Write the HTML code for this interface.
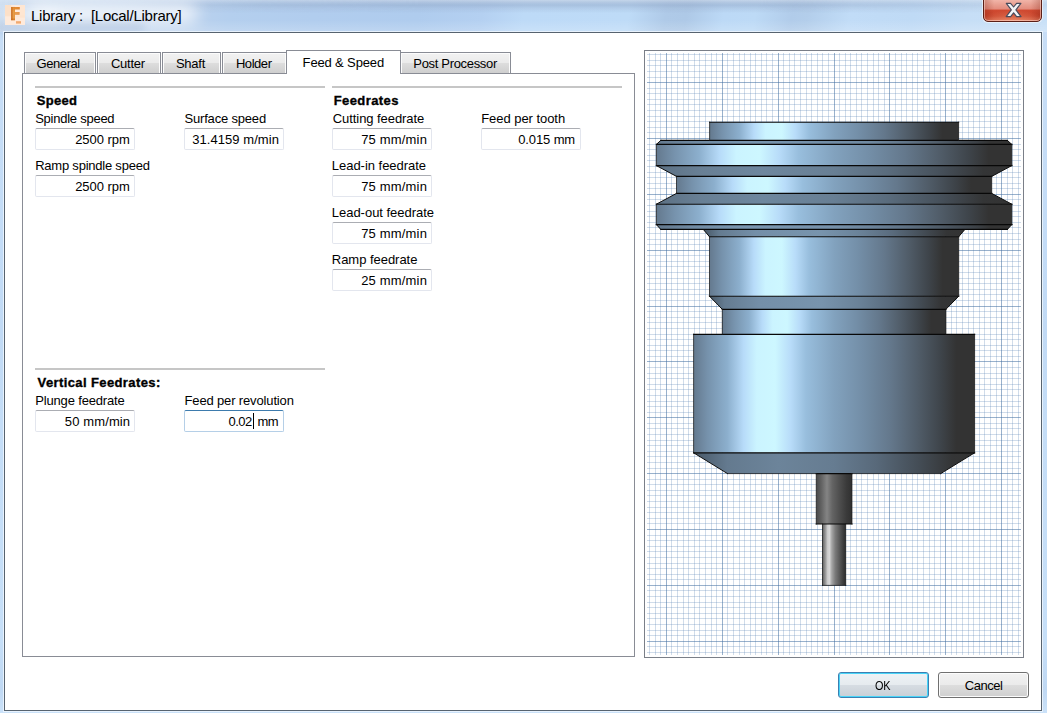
<!DOCTYPE html>
<html><head><meta charset="utf-8"><title>Library</title>
<style>
html,body{margin:0;padding:0}
body{width:1047px;height:713px;overflow:hidden;position:relative;background:#c3dcf6;font-family:"Liberation Sans", sans-serif;}
.abs{position:absolute}
#frame{position:absolute;left:0;top:0;width:1047px;height:713px;
 background:linear-gradient(180deg,#c8def6 0px,#c3dcf7 250px,#c1daf5 330px,#c4ddf7 420px,#c6dff8 640px,#bfd8f3 690px,#cbe2f9 713px);}
#titlebar{position:absolute;left:0;top:0;width:1047px;height:32px;
 background:
  linear-gradient(180deg,rgba(255,255,255,.22) 0px,rgba(255,255,255,.1) 3px,rgba(255,255,255,0) 12px,rgba(255,255,255,0) 20px,rgba(255,255,255,.18) 31px),
  linear-gradient(100deg,#cbdcf0 0%,#bdd3ee 17%,#b4cfee 22%,#b1cdee 30%,#afccee 40%,#b4d0f1 46%,#bddaf7 50%,#bedbf7 60%,#afcae8 63.5%,#aec9e7 65.5%,#bcd9f6 69%,#bddaf6 72%,#b1ccea 75.5%,#b3ceeb 77%,#c1dcf7 81%,#bfdaf5 87%,#c6def6 92%,#c8e0f7 100%);}
#band{position:absolute;left:0;top:0;width:1047px;height:14px;
 background:linear-gradient(180deg,rgba(190,203,222,.55) 0px,rgba(170,188,214,.6) 2px,rgba(140,164,198,.5) 5px,rgba(145,168,202,.3) 8px,rgba(170,195,225,0) 13px);
 -webkit-mask-image:linear-gradient(90deg,rgba(0,0,0,0) 0px,rgba(0,0,0,.15) 120px,rgba(0,0,0,.8) 260px,#000 420px,#000 760px,rgba(0,0,0,.7) 900px,rgba(0,0,0,.35) 1047px);
 mask-image:linear-gradient(90deg,rgba(0,0,0,0) 0px,rgba(0,0,0,.15) 120px,rgba(0,0,0,.8) 260px,#000 420px,#000 760px,rgba(0,0,0,.7) 900px,rgba(0,0,0,.35) 1047px);}
#shade{position:absolute;left:-6px;top:23px;width:150px;height:9px;background:rgba(110,140,185,.24);filter:blur(4px)}
#glow{position:absolute;left:26px;top:3px;width:172px;height:21px;border-radius:11px;background:rgba(255,255,255,.72);filter:blur(8px)}
#glow2{position:absolute;left:0px;top:8px;width:60px;height:20px;background:rgba(240,246,252,.35);filter:blur(5px)}
#client{position:absolute;left:4px;top:32px;width:1036px;height:677px;background:#fff;border:1px solid #57636f;
 box-shadow:0 0 0 1px rgba(235,244,253,.9);}
.t{position:absolute;white-space:pre;line-height:20px;height:20px;}
.ed{position:absolute;background:#fff;border:1px solid #e3e6ee;border-top-color:#abadb3;border-radius:2px;}
.ed.foc{border-color:#b5cfe7;border-top-color:#3d7bad;}
.tab{position:absolute;border:1px solid #898c95;border-bottom:none;
 background:linear-gradient(180deg,#f2f2f2 0%,#ebebeb 48%,#dddddd 52%,#cfcfcf 100%);box-shadow:inset 1px 1px 0 #fcfcfc, inset -1px 0 0 #fcfcfc;}
.tab.sel{background:#fff;box-shadow:none}
#pane{position:absolute;left:22px;top:73px;width:611px;height:582px;border:1px solid #898c95;background:#fff}
.sep{position:absolute;height:2px;background:#c6c6c6}
#preview{position:absolute;left:644px;top:50px;width:378px;height:606px;border:1px solid #7a7f88;background:#fff}
.btn{position:absolute;border:1px solid #707070;border-radius:3px;box-shadow:inset 0 0 0 1px #fcfcfc;
 background:linear-gradient(180deg,#f2f2f2 0%,#ebebeb 48%,#dddddd 52%,#cfcfcf 100%);}
.btn.def{border-color:#3c7fb1;box-shadow:inset 0 0 0 1px #48d4f8;
 background:linear-gradient(180deg,#eef2f5 0%,#e6ebef 48%,#d6dce2 52%,#c8cfd6 100%);}
#close{position:absolute;left:983px;top:-2px;width:57px;height:22px;border:1px solid #5b1f17;border-radius:0 0 5px 5px;
 box-shadow:inset 0 0 0 1px rgba(255,220,210,.55), 0 0 0 1px rgba(255,255,255,.55);
 background:
  radial-gradient(ellipse 60% 55% at 50% 105%,rgba(255,170,130,.55) 0%,rgba(255,170,130,0) 100%),
  linear-gradient(90deg,rgba(120,30,15,.28) 0%,rgba(120,30,15,0) 18%,rgba(120,30,15,0) 82%,rgba(120,30,15,.28) 100%),
  linear-gradient(180deg,#f3b9ad 0%,#e9a092 25%,#e38c7d 46%,#d04a31 50%,#c8432b 78%,#d4654c 100%);}
</style></head>
<body>
<div id="frame"></div>
<div id="titlebar"></div><div id="band"></div><div id="glow2"></div><div id="glow"></div><div id="shade"></div>
<svg class="abs" style="left:5px;top:5px" width="20" height="20" viewBox="0 0 20 20">
<defs><linearGradient id="gi" x1="0" y1="0" x2="1" y2="0"><stop offset="0" stop-color="#c4661c"/><stop offset="0.3" stop-color="#e9a04a"/><stop offset="0.45" stop-color="#e28d35"/><stop offset="1" stop-color="#e0842f"/></linearGradient>
<linearGradient id="gi2" x1="0" y1="0" x2="0" y2="1"><stop offset="0" stop-color="#d9771f" stop-opacity=".55"/><stop offset="0.35" stop-color="#d9771f" stop-opacity="0"/><stop offset="0.8" stop-color="#c05c14" stop-opacity="0"/><stop offset="1" stop-color="#c05c14" stop-opacity=".6"/></linearGradient></defs>
<rect width="20" height="20" fill="#feeadb"/>
<rect x="0" y="0" width="6.2" height="10.8" fill="#fbdcc1" opacity=".75"/>
<rect x="0" y="10.8" width="20" height="0.6" fill="#fbdcc1" opacity=".5"/>
<rect x="15" y="0" width="5" height="13" fill="#fde2cc" opacity=".6"/>
<path d="M6.1,1.9 H14.8 V4.6 H9.95 V7.1 H14.5 V9.8 H9.95 V15.2 H6.1 Z" fill="url(#gi)"/>
<path d="M6.1,1.9 H9.95 V15.2 H6.1 Z" fill="url(#gi2)"/>
<rect x="10" y="7.1" width="4.5" height="2.7" fill="#f0b27a" opacity=".45"/>
<rect x="11" y="16.2" width="5" height="2.4" fill="#f1a970"/>
</svg>
<div id="close"></div>
<svg class="abs" style="left:1004px;top:2px" width="20" height="16" viewBox="0 0 20 16">
<path d="M2.3,1.4 L6.6,1.4 L9.6,5.0 L12.6,1.4 L16.9,1.4 L11.9,7.9 L17.0,14.6 L12.6,14.6 L9.6,10.8 L6.6,14.6 L2.2,14.6 L7.3,7.9 Z" fill="#f3f3f5" stroke="#474b5c" stroke-width="1.15" stroke-linejoin="round"/>
</svg>
<div id="client"></div>
<div id="pane"></div>
<div class="tab" style="left:24px;top:52px;width:70px;height:20px"></div><div class="tab" style="left:97px;top:52px;width:62px;height:20px"></div><div class="tab" style="left:162px;top:52px;width:57px;height:20px"></div><div class="tab" style="left:222px;top:52px;width:63px;height:20px"></div><div class="tab" style="left:401px;top:52px;width:109px;height:20px;border-left:none"></div><div class="tab sel" style="left:286px;top:50px;width:113px;height:23px"></div>
<div class="sep" style="left:35px;top:86px;width:290px"></div>
<div class="sep" style="left:332px;top:86px;width:290px"></div>
<div class="sep" style="left:35px;top:368px;width:290px"></div>
<div class="ed" style="left:35px;top:128px;width:98px;height:20px"></div><div class="ed" style="left:184px;top:128px;width:98px;height:20px"></div><div class="ed" style="left:35px;top:175px;width:98px;height:20px"></div><div class="ed" style="left:332px;top:128px;width:98px;height:20px"></div><div class="ed" style="left:481px;top:128px;width:98px;height:20px"></div><div class="ed" style="left:332px;top:175px;width:98px;height:20px"></div><div class="ed" style="left:332px;top:222px;width:98px;height:20px"></div><div class="ed" style="left:332px;top:269px;width:98px;height:20px"></div><div class="ed" style="left:35px;top:410px;width:98px;height:20px"></div><div class="ed foc" style="left:184px;top:410px;width:98px;height:20px"></div>
<div id="preview"></div>
<svg width="1047" height="713" viewBox="0 0 1047 713" style="position:absolute;left:0;top:0">
<defs>
<linearGradient id="gB"><stop offset="0" stop-color="rgb(100,121,142)"/><stop offset="0.05" stop-color="rgb(118,146,172)"/><stop offset="0.12" stop-color="rgb(140,175,205)"/><stop offset="0.178" stop-color="rgb(183,219,249)"/><stop offset="0.225" stop-color="rgb(203,244,255)"/><stop offset="0.29" stop-color="rgb(205,247,255)"/><stop offset="0.345" stop-color="rgb(184,220,249)"/><stop offset="0.4" stop-color="rgb(152,190,221)"/><stop offset="0.5" stop-color="rgb(130,162,190)"/><stop offset="0.6" stop-color="rgb(115,142,167)"/><stop offset="0.7" stop-color="rgb(100,120,140)"/><stop offset="0.8" stop-color="rgb(80,92,104)"/><stop offset="0.88" stop-color="rgb(62,68,74)"/><stop offset="0.935" stop-color="rgb(51,51,51)"/><stop offset="1" stop-color="rgb(51,51,51)"/></linearGradient>
<linearGradient id="gT"><stop offset="0" stop-color="rgb(100,121,142)"/><stop offset="0.1" stop-color="rgb(110,136,160)"/><stop offset="0.25" stop-color="rgb(120,149,175)"/><stop offset="0.4" stop-color="rgb(118,146,172)"/><stop offset="0.5" stop-color="rgb(114,141,166)"/><stop offset="0.6" stop-color="rgb(112,138,162)"/><stop offset="0.7" stop-color="rgb(98,118,138)"/><stop offset="0.8" stop-color="rgb(80,92,104)"/><stop offset="0.9" stop-color="rgb(60,65,70)"/><stop offset="0.94" stop-color="rgb(51,51,51)"/><stop offset="1" stop-color="rgb(51,51,51)"/></linearGradient>
<linearGradient id="gT2"><stop offset="0" stop-color="rgb(98,119,140)"/><stop offset="0.1" stop-color="rgb(112,138,162)"/><stop offset="0.25" stop-color="rgb(122,150,176)"/><stop offset="0.5" stop-color="rgb(118,145,170)"/><stop offset="0.6" stop-color="rgb(108,132,155)"/><stop offset="0.7" stop-color="rgb(95,114,133)"/><stop offset="0.8" stop-color="rgb(78,90,102)"/><stop offset="0.9" stop-color="rgb(60,65,70)"/><stop offset="0.94" stop-color="rgb(51,51,51)"/><stop offset="1" stop-color="rgb(51,51,51)"/></linearGradient>
<linearGradient id="gN"><stop offset="0" stop-color="rgb(70,86,101)"/><stop offset="0.06" stop-color="rgb(100,123,144)"/><stop offset="0.2" stop-color="rgb(116,143,168)"/><stop offset="0.45" stop-color="rgb(120,148,173)"/><stop offset="0.6" stop-color="rgb(106,130,152)"/><stop offset="0.72" stop-color="rgb(90,108,126)"/><stop offset="0.84" stop-color="rgb(68,77,86)"/><stop offset="0.93" stop-color="rgb(52,53,54)"/><stop offset="1" stop-color="rgb(51,51,51)"/></linearGradient>
<linearGradient id="gC"><stop offset="0" stop-color="rgb(92,112,131)"/><stop offset="0.12" stop-color="rgb(104,127,148)"/><stop offset="0.3" stop-color="rgb(110,135,158)"/><stop offset="0.5" stop-color="rgb(104,127,148)"/><stop offset="0.65" stop-color="rgb(90,108,125)"/><stop offset="0.8" stop-color="rgb(70,80,90)"/><stop offset="0.92" stop-color="rgb(52,53,54)"/><stop offset="1" stop-color="rgb(51,51,51)"/></linearGradient>
<linearGradient id="gC2"><stop offset="0" stop-color="rgb(72,88,103)"/><stop offset="0.12" stop-color="rgb(100,122,143)"/><stop offset="0.3" stop-color="rgb(108,132,154)"/><stop offset="0.5" stop-color="rgb(102,124,145)"/><stop offset="0.65" stop-color="rgb(88,105,122)"/><stop offset="0.8" stop-color="rgb(68,77,86)"/><stop offset="0.92" stop-color="rgb(52,53,54)"/><stop offset="1" stop-color="rgb(51,51,51)"/></linearGradient>
<linearGradient id="gS"><stop offset="0" stop-color="rgb(72,72,72)"/><stop offset="0.15" stop-color="rgb(100,100,100)"/><stop offset="0.3" stop-color="rgb(132,132,132)"/><stop offset="0.45" stop-color="rgb(100,100,100)"/><stop offset="0.65" stop-color="rgb(78,78,78)"/><stop offset="0.85" stop-color="rgb(58,58,58)"/><stop offset="1" stop-color="rgb(48,48,48)"/></linearGradient>
<linearGradient id="gK"><stop offset="0" stop-color="rgb(96,96,96)"/><stop offset="0.12" stop-color="rgb(150,150,150)"/><stop offset="0.22" stop-color="rgb(205,205,205)"/><stop offset="0.3" stop-color="rgb(214,214,214)"/><stop offset="0.4" stop-color="rgb(165,165,165)"/><stop offset="0.55" stop-color="rgb(122,122,122)"/><stop offset="0.75" stop-color="rgb(86,86,86)"/><stop offset="0.9" stop-color="rgb(60,60,60)"/><stop offset="1" stop-color="rgb(46,46,46)"/></linearGradient>
</defs>
<g fill="none" stroke-width="1" shape-rendering="crispEdges"><path d="M649.5,53V655M655.5,53V655M660.5,53V655M671.5,53V655M677.5,53V655M683.5,53V655M688.5,53V655M694.5,53V655M699.5,53V655M705.5,53V655M711.5,53V655M716.5,53V655M727.5,53V655M733.5,53V655M739.5,53V655M744.5,53V655M750.5,53V655M755.5,53V655M761.5,53V655M766.5,53V655M772.5,53V655M783.5,53V655M789.5,53V655M794.5,53V655M800.5,53V655M806.5,53V655M811.5,53V655M817.5,53V655M822.5,53V655M828.5,53V655M839.5,53V655M845.5,53V655M850.5,53V655M856.5,53V655M861.5,53V655M867.5,53V655M873.5,53V655M878.5,53V655M884.5,53V655M895.5,53V655M901.5,53V655M906.5,53V655M912.5,53V655M917.5,53V655M923.5,53V655M929.5,53V655M934.5,53V655M940.5,53V655M951.5,53V655M956.5,53V655M962.5,53V655M968.5,53V655M973.5,53V655M979.5,53V655M984.5,53V655M990.5,53V655M996.5,53V655M1007.5,53V655M1012.5,53V655M1018.5,53V655" stroke="rgba(100,140,184,0.30)"/><path d="M647,54.5H1021M647,60.5H1021M647,65.5H1021M647,71.5H1021M647,77.5H1021M647,88.5H1021M647,93.5H1021M647,99.5H1021M647,104.5H1021M647,110.5H1021M647,116.5H1021M647,121.5H1021M647,127.5H1021M647,132.5H1021M647,144.5H1021M647,149.5H1021M647,155.5H1021M647,160.5H1021M647,166.5H1021M647,172.5H1021M647,177.5H1021M647,183.5H1021M647,188.5H1021M647,199.5H1021M647,205.5H1021M647,211.5H1021M647,216.5H1021M647,222.5H1021M647,227.5H1021M647,233.5H1021M647,239.5H1021M647,244.5H1021M647,255.5H1021M647,261.5H1021M647,266.5H1021M647,272.5H1021M647,278.5H1021M647,283.5H1021M647,289.5H1021M647,294.5H1021M647,300.5H1021M647,311.5H1021M647,317.5H1021M647,322.5H1021M647,328.5H1021M647,334.5H1021M647,339.5H1021M647,345.5H1021M647,350.5H1021M647,356.5H1021M647,367.5H1021M647,373.5H1021M647,378.5H1021M647,384.5H1021M647,389.5H1021M647,395.5H1021M647,401.5H1021M647,406.5H1021M647,412.5H1021M647,423.5H1021M647,428.5H1021M647,434.5H1021M647,440.5H1021M647,445.5H1021M647,451.5H1021M647,456.5H1021M647,462.5H1021M647,468.5H1021M647,479.5H1021M647,484.5H1021M647,490.5H1021M647,495.5H1021M647,501.5H1021M647,507.5H1021M647,512.5H1021M647,518.5H1021M647,523.5H1021M647,535.5H1021M647,540.5H1021M647,546.5H1021M647,551.5H1021M647,557.5H1021M647,563.5H1021M647,568.5H1021M647,574.5H1021M647,579.5H1021M647,590.5H1021M647,596.5H1021M647,602.5H1021M647,607.5H1021M647,613.5H1021M647,618.5H1021M647,624.5H1021M647,630.5H1021M647,635.5H1021M647,646.5H1021M647,652.5H1021" stroke="rgba(100,140,184,0.30)"/><path d="M666.5,53V655M722.5,53V655M778.5,53V655M834.5,53V655M889.5,53V655M945.5,53V655M1001.5,53V655" stroke="rgba(66,110,160,0.54)"/><path d="M647,82.5H1021M647,138.5H1021M647,194.5H1021M647,250.5H1021M647,306.5H1021M647,361.5H1021M647,417.5H1021M647,473.5H1021M647,529.5H1021M647,585.5H1021M647,641.5H1021" stroke="rgba(66,110,160,0.54)"/></g>
<g><rect x="709.60" y="122.20" width="249.00" height="18.20" fill="url(#gB)"/><polygon points="660.80,140.40 1007.40,140.40 1011.80,144.40 656.40,144.40" fill="url(#gT)"/><rect x="656.40" y="144.40" width="355.40" height="21.20" fill="url(#gB)"/><polygon points="656.40,165.60 1011.80,165.60 991.70,176.40 676.50,176.40" fill="url(#gC)"/><rect x="676.50" y="176.40" width="315.20" height="17.00" fill="url(#gB)"/><polygon points="676.50,193.40 991.70,193.40 1011.80,204.20 656.40,204.20" fill="url(#gC)"/><rect x="656.40" y="204.20" width="355.40" height="20.40" fill="url(#gB)"/><polygon points="656.40,224.60 1011.80,224.60 1007.40,229.40 660.80,229.40" fill="url(#gT2)"/><polygon points="703.30,229.40 964.90,229.40 958.70,236.70 709.50,236.70" fill="url(#gN)"/><rect x="709.50" y="236.70" width="249.20" height="59.50" fill="url(#gB)"/><polygon points="709.50,296.20 958.70,296.20 945.90,309.30 722.30,309.30" fill="url(#gN)"/><rect x="722.30" y="309.30" width="223.60" height="25.00" fill="url(#gB)"/><rect x="693.60" y="334.30" width="281.00" height="118.50" fill="url(#gB)"/><polygon points="693.60,452.80 974.60,452.80 940.70,473.60 727.50,473.60" fill="url(#gC2)"/><rect x="816.25" y="473.60" width="35.70" height="50.40" fill="url(#gS)"/><rect x="822.50" y="524.00" width="23.20" height="61.40" fill="url(#gK)"/></g>
<g fill="none" stroke-linecap="square"><path d="M709.60,140.40L660.80,140.40M660.80,229.40L703.30,229.40M722.30,334.30L693.60,334.30M816.25,524.00L822.50,524.00M958.60,140.40L1007.40,140.40M1007.40,229.40L964.90,229.40M945.90,334.30L974.60,334.30M851.95,524.00L845.70,524.00M709.60,122.20L958.60,122.20M660.80,140.40L1007.40,140.40M656.40,144.40L1011.80,144.40M656.40,165.60L1011.80,165.60M676.50,176.40L991.70,176.40M676.50,193.40L991.70,193.40M656.40,204.20L1011.80,204.20M656.40,224.60L1011.80,224.60M660.80,229.40L1007.40,229.40M709.50,236.70L958.70,236.70M709.50,296.20L958.70,296.20M722.30,309.30L945.90,309.30M693.60,334.30L974.60,334.30M693.60,452.80L974.60,452.80M816.25,524.00L851.95,524.00M816.25,473.60L851.95,473.60" stroke="#080808" stroke-width="1.15"/><path d="M660.80,140.40L656.40,144.40M656.40,165.60L676.50,176.40M676.50,193.40L656.40,204.20M656.40,224.60L660.80,229.40M703.30,229.40L709.50,236.70M709.50,296.20L722.30,309.30M693.60,452.80L727.50,473.60M1007.40,140.40L1011.80,144.40M1011.80,165.60L991.70,176.40M991.70,193.40L1011.80,204.20M1011.80,224.60L1007.40,229.40M964.90,229.40L958.70,236.70M958.70,296.20L945.90,309.30M974.60,452.80L940.70,473.60" stroke="#0c0c0c" stroke-width="1.0"/><path d="M709.60,122.20L709.60,140.40M656.40,144.40L656.40,165.60M676.50,176.40L676.50,193.40M656.40,204.20L656.40,224.60M709.50,236.70L709.50,296.20M722.30,309.30L722.30,334.30M693.60,334.30L693.60,452.80M727.50,473.60L816.25,473.60M816.25,473.60L816.25,524.00M822.50,524.00L822.50,585.40M958.60,122.20L958.60,140.40M1011.80,144.40L1011.80,165.60M991.70,176.40L991.70,193.40M1011.80,204.20L1011.80,224.60M958.70,236.70L958.70,296.20M945.90,309.30L945.90,334.30M974.60,334.30L974.60,452.80M940.70,473.60L851.95,473.60M851.95,473.60L851.95,524.00M845.70,524.00L845.70,585.40M822.50,585.40L845.70,585.40" stroke="#161616" stroke-width="0.75"/></g>
</svg>
<div class="btn def" style="left:838px;top:672px;width:89px;height:24px"></div>
<div class="btn" style="left:938px;top:672px;width:89px;height:24px"></div>
<div class="abs" style="left:253px;top:413px;width:1px;height:16px;background:#000"></div>
<span id="title" class="t" style="left:31.00px;top:5.80px;font-size:15px;font-weight:400;letter-spacing:-0.240px;color:#000">Library :  [Local/Library]</span>
<span id="tabGeneral" class="t" style="left:36.60px;top:53.50px;font-size:13px;font-weight:400;letter-spacing:-0.433px;color:#000">General</span>
<span id="tabCutter" class="t" style="left:110.90px;top:53.50px;font-size:13px;font-weight:400;letter-spacing:-0.240px;color:#000">Cutter</span>
<span id="tabShaft" class="t" style="left:175.90px;top:53.50px;font-size:13px;font-weight:400;letter-spacing:-0.250px;color:#000">Shaft</span>
<span id="tabHolder" class="t" style="left:235.90px;top:53.50px;font-size:13px;font-weight:400;letter-spacing:-0.440px;color:#000">Holder</span>
<span id="tabFeed" class="t" style="left:302.60px;top:52.50px;font-size:13px;font-weight:400;letter-spacing:-0.145px;color:#000">Feed &amp; Speed</span>
<span id="tabPost" class="t" style="left:413.30px;top:53.50px;font-size:13px;font-weight:400;letter-spacing:-0.323px;color:#000">Post Processor</span>
<span id="hSpeed" class="t" style="left:36.70px;top:90.50px;font-size:13px;font-weight:700;letter-spacing:0.300px;color:#000;-webkit-text-stroke:0.35px #000">Speed</span>
<span id="lSpindle" class="t" style="left:35.20px;top:108.50px;font-size:13px;font-weight:400;letter-spacing:-0.250px;color:#000">Spindle speed</span>
<span id="vSpindle" class="t" style="left:75.20px;top:129.50px;font-size:13px;font-weight:400;letter-spacing:-0.057px;color:#000">2500 rpm</span>
<span id="lSurface" class="t" style="left:184.50px;top:108.50px;font-size:13px;font-weight:400;letter-spacing:-0.183px;color:#000">Surface speed</span>
<span id="vSurface" class="t" style="left:192.30px;top:129.50px;font-size:13px;font-weight:400;letter-spacing:0.050px;color:#000">31.4159 m/min</span>
<span id="lRampSp" class="t" style="left:35.20px;top:155.50px;font-size:13px;font-weight:400;letter-spacing:-0.224px;color:#000">Ramp spindle speed</span>
<span id="vRampSp" class="t" style="left:75.20px;top:176.50px;font-size:13px;font-weight:400;letter-spacing:-0.057px;color:#000">2500 rpm</span>
<span id="hFeed" class="t" style="left:333.70px;top:90.50px;font-size:13px;font-weight:700;letter-spacing:0.425px;color:#000;-webkit-text-stroke:0.35px #000">Feedrates</span>
<span id="lCut" class="t" style="left:332.80px;top:108.50px;font-size:13px;font-weight:400;letter-spacing:-0.067px;color:#000">Cutting feedrate</span>
<span id="vCut" class="t" style="left:361.20px;top:129.50px;font-size:13px;font-weight:400;letter-spacing:0.175px;color:#000">75 mm/min</span>
<span id="lFpt" class="t" style="left:481.20px;top:108.50px;font-size:13px;font-weight:400;letter-spacing:-0.046px;color:#000">Feed per tooth</span>
<span id="vFpt" class="t" style="left:518.20px;top:129.50px;font-size:13px;font-weight:400;letter-spacing:-0.114px;color:#000">0.015 mm</span>
<span id="lLin" class="t" style="left:331.80px;top:155.50px;font-size:13px;font-weight:400;letter-spacing:-0.027px;color:#000">Lead-in feedrate</span>
<span id="vLin" class="t" style="left:361.20px;top:176.50px;font-size:13px;font-weight:400;letter-spacing:0.175px;color:#000">75 mm/min</span>
<span id="lLout" class="t" style="left:331.80px;top:202.50px;font-size:13px;font-weight:400;letter-spacing:-0.025px;color:#000">Lead-out feedrate</span>
<span id="vLout" class="t" style="left:361.20px;top:223.50px;font-size:13px;font-weight:400;letter-spacing:0.175px;color:#000">75 mm/min</span>
<span id="lRamp" class="t" style="left:331.80px;top:249.50px;font-size:13px;font-weight:400;letter-spacing:-0.033px;color:#000">Ramp feedrate</span>
<span id="vRamp" class="t" style="left:361.20px;top:270.50px;font-size:13px;font-weight:400;letter-spacing:0.175px;color:#000">25 mm/min</span>
<span id="hVert" class="t" style="left:37.60px;top:372.50px;font-size:13px;font-weight:700;letter-spacing:0.389px;color:#000;-webkit-text-stroke:0.35px #000">Vertical Feedrates:</span>
<span id="lPlunge" class="t" style="left:35.20px;top:390.50px;font-size:13px;font-weight:400;letter-spacing:-0.157px;color:#000">Plunge feedrate</span>
<span id="vPlunge" class="t" style="left:64.80px;top:411.50px;font-size:13px;font-weight:400;letter-spacing:0.125px;color:#000">50 mm/min</span>
<span id="lFpr" class="t" style="left:184.50px;top:390.50px;font-size:13px;font-weight:400;letter-spacing:-0.144px;color:#000">Feed per revolution</span>
<span id="vFpr1" class="t" style="left:228.50px;top:411.50px;font-size:13px;font-weight:400;letter-spacing:-0.533px;color:#000">0.02</span>
<span id="vFpr2" class="t" style="left:257.50px;top:411.50px;font-size:13px;font-weight:400;letter-spacing:-0.600px;color:#000">mm</span>
<span id="bOK" class="t" style="left:874.80px;top:675.50px;font-size:13px;font-weight:400;letter-spacing:-0.400px;color:#000;transform:scaleX(0.84);transform-origin:0 50%">OK</span>
<span id="bCancel" class="t" style="left:964.80px;top:675.50px;font-size:13px;font-weight:400;letter-spacing:-0.480px;color:#000">Cancel</span>
</body></html>
